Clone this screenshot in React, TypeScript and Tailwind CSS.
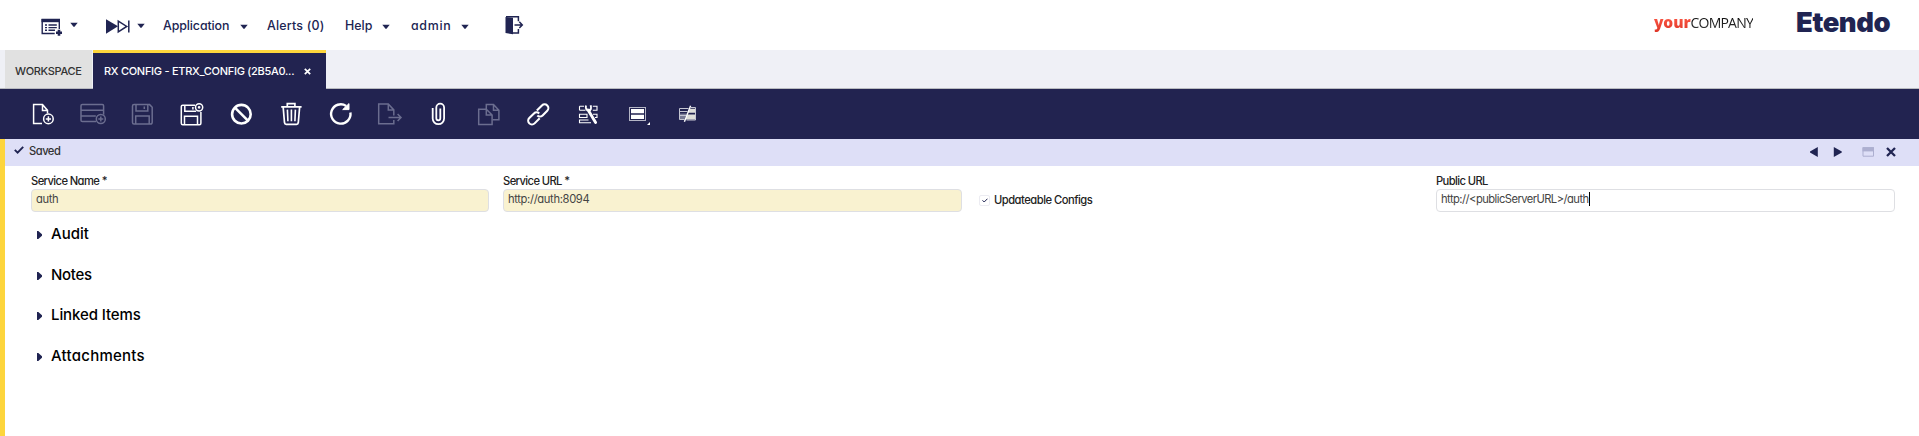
import type { ReactNode } from 'react';

const Caret = ({ className = '' }: { className?: string }) => (
  <svg className={`h-[6px] w-[8px] shrink-0 ${className}`} viewBox="0 0 8 6">
    <path d="M0.3 0.8h7.4L4.7 4.5q-.7.8-1.4 0z" fill="#202452" />
  </svg>
);

const Tool = ({ dim = false, children }: { dim?: boolean; children: ReactNode }) => (
  <button className="flex h-[50px] w-[49.55px] shrink-0 items-center justify-center">
    <svg
      className={dim ? 'h-[30px] w-[30px] text-[#6b6d8f]' : 'h-[30px] w-[30px] text-white'}
      viewBox="0 0 30 30"
      fill="none"
      stroke="currentColor"
      strokeWidth="1.5"
    >
      {children}
    </svg>
  </button>
);

const Toolbar = () => (
  <div className="flex h-[50px] bg-[#222350] pl-[18px]">
    <Tool>
      <path d="M14 24.5H5.6V5.6h8.9l5 5.8v3M14.5 5.6v5.8h5" />
      <circle cx="20.4" cy="19.9" r="4.8" />
      <path d="M20.4 17.3v5.2M17.8 19.9H23" />
    </Tool>
    <Tool dim>
      <path d="M19 22.5H5.3q-1.3 0-1.3-1.3V6.8q0-1.3 1.3-1.3h20q1.3 0 1.3 1.3v9M4 11.3h22.6M4 17h14.8" />
      <circle cx="23.8" cy="20" r="4.5" />
      <path d="M23.8 17.5v5M21.3 20h5" />
    </Tool>
    <Tool dim>
      <path d="M7 5.6h15.6l2.6 2.6v15q0 1.8-1.8 1.8H7q-1.5 0-1.5-1.5V7.1q0-1.5 1.5-1.5z" />
      <path d="M9 5.6v6.3h11.8V5.6M17.3 7.6v2.5M8.7 25v-8h13.5v8" />
    </Tool>
    <Tool>
      <g transform="translate(.6)">
        <path d="M18.5 6.2H6Q4.7 6.2 4.7 7.5v16.7q0 1.5 1.5 1.5h16.6q1.5 0 1.5-1.5V13" />
        <path d="M8.2 6.2v6h11.4M16.3 8v2.5M7.9 25.7v-8.4h13v8.4" />
        <circle cx="22.5" cy="8.3" r="3.6" />
        <circle cx="22.5" cy="8.3" r="0.6" />
      </g>
    </Tool>
    <Tool>
      <circle cx="15.4" cy="15.2" r="9.3" strokeWidth="2.6" />
      <path d="M8.9 8.7l13 13" strokeWidth="2.6" />
    </Tool>
    <Tool>
      <path d="M5.2 7.9h20.4M11.3 7.5V4.7h7.6v2.8M7.2 8.5l1.3 15.2q.2 1.6 1.7 1.6h10.4q1.5 0 1.7-1.6L23.6 8.5" strokeWidth="1.7" />
      <path d="M11.4 10.6l.5 11.7M15.4 10.6v11.7M19.4 10.6l-.5 11.7" strokeWidth="1.6" />
    </Tool>
    <Tool>
      <path d="M25.4 13.5a9.7 9.7 0 1 1-4.2-6.6" strokeWidth="2.4" />
      <path d="M24 4.6v6h-6.3z" strokeWidth="1" fill="currentColor" />
    </Tool>
    <Tool dim>
      <path d="M18.8 21v3.7H3.7V4.9h9.6l5.5 6v5.5M13.3 4.9v6h5.5M13.5 18.5h12M22.6 15l3.4 3.5-3.4 3.5" />
    </Tool>
    <Tool>
      <path
        d="M8.7 9v10.5a5.7 5.7 0 0 0 11.4 0V8.6a3.9 3.9 0 0 0-7.8 0v10.7a2 2 0 0 0 4 0V9.5"
        strokeWidth="1.8"
      />
    </Tool>
    <Tool dim>
      <path d="M12.3 10.3V5.6h7.2l5.4 5.6v9.5h-6.3M19.5 5.6v5.6h5.4" />
      <path d="M4.7 10.3h7.6l5.8 5.7v9.6H4.7zM12.3 10.3V16h5.8" />
    </Tool>
    <Tool>
      <g transform="rotate(-45 15.2 15.4)" strokeWidth="2.1">
        <path d="M13.5 19.2H6.3a3.7 3.7 0 0 1 0-7.5h6.6a3.7 3.7 0 0 1 3.7 3.7" />
        <path d="M17 11.7h7.2a3.7 3.7 0 0 1 0 7.5h-6.6a3.7 3.7 0 0 1-3.7-3.7" />
      </g>
    </Tool>
    <Tool>
      <path
        d="M6.5 7.3h4.5M6.5 11.3h6M6.5 7.3v4M19.8 7.3h4.2v4h-4.2M6.5 15.3h7.5v3.2H6.5zM20 15.3h4v3.2h-2M6.5 20.5v3.3H18M6.5 21h9"
        strokeWidth="1.1"
      />
      <path d="M16 12.5l6.6 11" strokeWidth="2.9" strokeLinecap="round" />
      <path d="M13 6.4q-1 4 2.6 5.7 3.6-1.2 2-5.9" strokeWidth="1.9" />
      <path d="M13.5 9.5l2.3 4 2.4-3.5z" fill="currentColor" stroke="none" />
    </Tool>
    <Tool>
      <rect x="7.5" y="8.5" width="16" height="13" stroke="#b5b6c6" strokeWidth="1" />
      <path d="M9 10h13v4.2H9zM9 15.8h13V20H9z" fill="currentColor" stroke="none" />
      <path d="M28 23v3h-3z" fill="currentColor" stroke="none" />
    </Tool>
    <Tool>
      <path d="M7.4 14.6h7.5l-2.6 5.8H7.4z" fill="#777994" stroke="none" />
      <path d="M18 9.8h5.2v4H16zM15.5 15.5h7.7v5h-10z" fill="#deded9" stroke="none" />
      <path d="M12.5 20.5H7.5v-11h9M8 12.5h7.5M8 16.5h6M19 8.5h4.5v12.5h-9" stroke="#c5c6d2" strokeWidth="1" />
      <path d="M18.6 6.8l-6.2 16" strokeWidth="1.4" />
    </Tool>
  </div>
);

const Field = ({
  label,
  value,
  className,
  focused = false,
}: {
  label: string;
  value: string;
  className: string;
  focused?: boolean;
}) => (
  <div className={`shrink-0 ${className}`}>
    <div className="h-[16px] text-[11.2px] leading-[16px] font-medium tracking-[-0.6px] text-[#222]">{label}</div>
    <div
      className={`flex h-[23px] items-center rounded-[4px] border border-[#dedfe3] pb-[3px] pl-[4px] text-[11.2px] text-[#444] ${focused ? 'bg-white tracking-[-0.54px]' : 'bg-[#f9f2d0] tracking-[-0.35px]'}`}
    >
      {value}
      {focused && <span className="h-[14px] w-px bg-black" />}
    </div>
  </div>
);

const Section = ({ title, className = '' }: { title: string; className?: string }) => (
  <div className="flex h-[40.6px] items-center">
    <svg className="mt-[2px] mr-[9px] h-[8px] w-[5px]" viewBox="0 0 5 8">
      <path d="M0 0h1.3L5 3.2v1.6L1.3 8H0z" fill="#202452" />
    </svg>
    <span className={`text-[15px] leading-[20px] font-medium text-black ${className}`}>{title}</span>
  </div>
);

export default function App() {
  return (
    <div className="flex h-[436px] w-[1919px] flex-col overflow-hidden bg-white font-[Inter,sans-serif] whitespace-nowrap [font-feature-settings:'cv11']">
      <header className="flex h-[50px] shrink-0 text-[12.4px] leading-[16px] font-medium text-[#202452]">
        <div className="flex w-[163px] pt-[17px] pl-[41px]">
          <svg className="h-[20px] w-[22px]" viewBox="0 0 22 20" fill="none" stroke="#202452">
            <path d="M18.3 12V2.5H1.2v14h12.5" strokeWidth="1.4" />
            <path d="M.5 2h18.5v3.2H.5z" fill="#202452" stroke="none" />
            <path d="M4 8h2M7.5 8h8.3M4 10.6h2M7.5 10.6h8.3M4 13.2h2M7.5 13.2h6.5" strokeWidth="1.4" />
            <path d="M18 12.8v6M15 15.8h6" strokeWidth="2.6" />
          </svg>
          <Caret className="mt-[5px] ml-[7px]" />
          <svg className="mt-[2px] ml-[27px] h-[15px] w-[26px]" viewBox="0 0 26 15">
            <path d="M1 0.3l12 7L1 14.7z" fill="#202452" />
            <path d="M13.3 2.2l8.4 5.2-8.4 5.4zM23.8 1.5v12" fill="none" stroke="#202452" strokeWidth="1.5" />
          </svg>
          <Caret className="mt-[6px] ml-[6px]" />
        </div>
        <div className="flex w-[104px] pt-[18px]">
          <span className="w-[77px] tracking-[-0.1px]">Application</span>
          <Caret className="mt-[6px]" />
        </div>
        <div className="w-[78px] pt-[18px] tracking-[0.2px]">Alerts (0)</div>
        <div className="flex w-[66px] pt-[18px]">
          <span className="w-[37px]">Help</span>
          <Caret className="mt-[6px]" />
        </div>
        <div className="flex pt-[18px]">
          <span className="w-[50px] tracking-[0.7px]">admin</span>
          <Caret className="mt-[6px]" />
        </div>
        <svg className="mt-[16px] ml-[36px] h-[19px] w-[19px]" viewBox="0 0 19 19">
          <path d="M.5 1l7.5.8v16.4L.5 17z" fill="#202452" />
          <path d="M1 .8h12.4v4.4M13.4 13v4H8M9.5 8.9h7.5M14.3 5.8l3 3.1-3 3.1" fill="none" stroke="#202452" strokeWidth="1.5" />
        </svg>
        <div className="ml-auto flex pr-[28px]">
          <div className="flex w-[142px] pt-[13px] font-['Open_Sans',sans-serif] text-[14px] leading-[19px]">
            <span className="bg-linear-to-b from-[#f5503e] from-20% to-[#c80f08] to-80% bg-clip-text text-[15.5px] font-extrabold tracking-[-0.1px] text-transparent">
              your
            </span>
            <span className="bg-linear-to-b from-[#111] from-20% to-[#999] to-90% bg-clip-text font-normal tracking-[-0.8px] text-transparent">
              COMPANY
            </span>
          </div>
          <span className="w-[95px] pt-[6px] text-[27.4px] leading-[33px] font-black tracking-[-0.4px]">Etendo</span>
        </div>
      </header>
      <nav className="flex h-[39px] shrink-0 border-b border-[#b9bbc0] bg-[#eff0f6] pl-[5px]">
        <div className="mr-px flex h-[38px] w-[87px] items-center bg-[#e1e1e1] pt-[5px] pl-[10px] text-[11px] font-medium tracking-[-0.3px] text-[#333]">
          WORKSPACE
        </div>
        <div className="flex h-[39px] w-[233px] shrink-0 items-center border-t-[3px] border-[#fdd53c] bg-[#222350] pl-[11px] text-[11px] font-medium text-white">
          <span className="w-[200px] tracking-[-0.28px]">RX CONFIG - ETRX_CONFIG (2B5A0...</span>
          <svg className="mt-[1px] h-[7px] w-[7px]" viewBox="0 0 7 7">
            <path d="M.8.8l5.4 5.4M6.2.8L.8 6.2" stroke="#fff" strokeWidth="1.7" />
          </svg>
        </div>
      </nav>
      <Toolbar />
      <main className="flex-1 border-l-[5px] border-[#fdd53c]">
        <div className="flex h-[27px] bg-[#dedff7] pl-[9px] text-[#333]">
          <svg className="mt-[7px] h-[8px] w-[10px]" viewBox="0 0 10 8">
            <path d="M.8 3.8l2.8 2.8L9.2.8" fill="none" stroke="#202452" strokeWidth="1.9" />
          </svg>
          <span className="mt-[4px] ml-[5px] text-[11.2px] leading-[16px] font-medium tracking-[-0.5px]">Saved</span>
          <svg className="mt-[7px] mr-[22px] ml-auto h-[12px] w-[87px]" viewBox="0 0 87 12" fill="#202452">
            <path d="M7.8 1v10L-.2 6.5v-1zM23.8 1v10l8-4.5v-1z" />
            <path d="M53 1.7h10.5v8.5H53z" fill="#dedff7" stroke="#adafd0" />
            <path d="M52.5 1.2H64v4.2H52.5z" fill="#adafd0" />
            <path d="M77 2l8 8M85 2l-8 8" stroke="#202452" strokeWidth="2.3" />
          </svg>
        </div>
        <div className="flex h-[48px] pt-[7px] pl-[26px]">
          <Field className="mr-[14px] w-[458px]" label="Service Name *" value="auth" />
          <Field className="mr-[17px] w-[459px]" label="Service URL *" value="http://auth:8094" />
          <div className="mt-[19px] flex h-[16px] w-[457px] shrink-0 items-center text-[11.2px] leading-[16px] font-medium tracking-[-0.5px] text-[#222]">
            <span className="mr-[4px] flex h-[11px] w-[11px] items-center justify-center rounded-[2px] border border-[#ececf2]">
              <svg className="h-[5px] w-[6px]" viewBox="0 0 6 5">
                <path d="M.5 2.3l1.7 1.7L5.5.7" fill="none" stroke="#202452" />
              </svg>
            </span>
            Updateable Configs
          </div>
          <Field className="w-[459px]" label="Public URL" value="http://<publicServerURL>/auth" focused />
        </div>
        <div className="pl-[32px]">
          <Section title="Audit" />
          <Section title="Notes" className="tracking-[-0.3px]" />
          <Section title="Linked Items" className="tracking-[-0.1px]" />
          <Section title="Attachments" className="tracking-[0.25px]" />
        </div>
      </main>
    </div>
  );
}
